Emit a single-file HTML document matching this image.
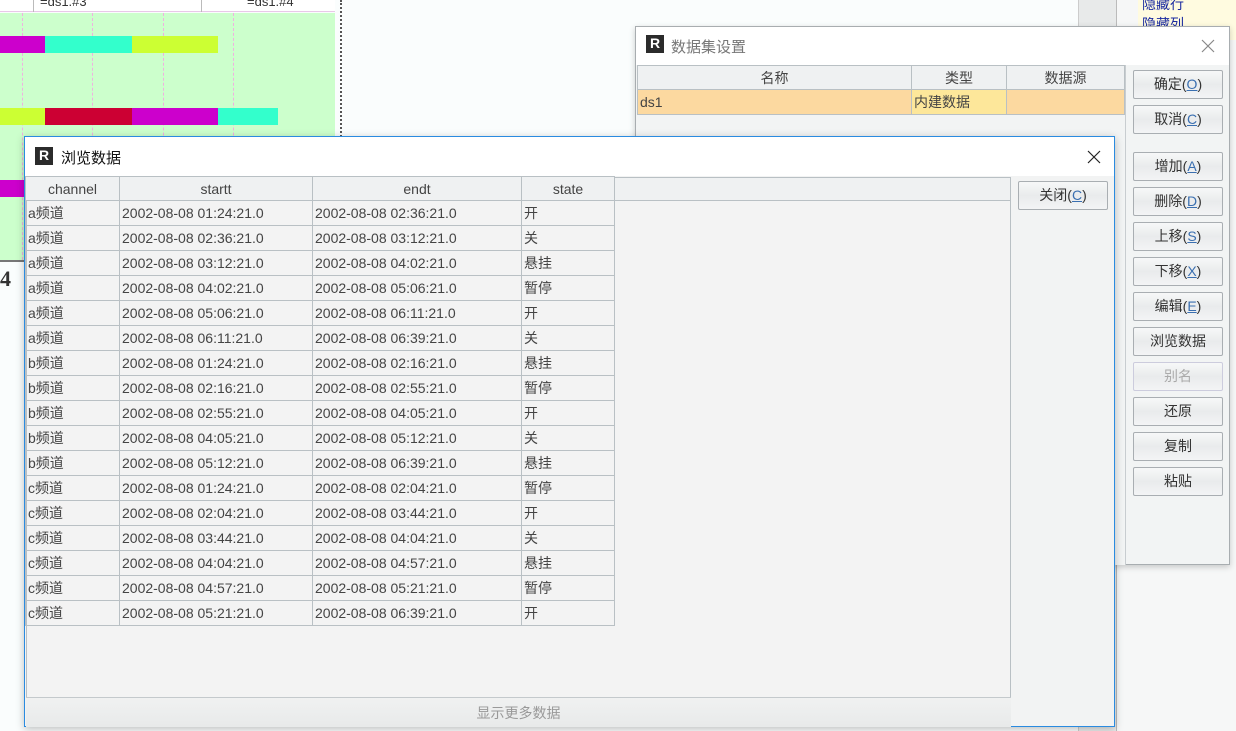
<!DOCTYPE html>
<html><head><meta charset="utf-8"><style>
*{box-sizing:border-box;margin:0;padding:0}
body{width:1236px;height:731px;overflow:hidden;background:#fafdfd;position:relative;font-family:"Liberation Sans","Noto Sans CJK SC",sans-serif;font-size:14px;color:#333}
.a{position:absolute}
.btn{position:absolute;width:90px;height:29px;border:1px solid #a9aeb2;border-radius:2px;background:linear-gradient(#f7f8f8,#e9ebec 50%,#f3f4f5);text-align:center;line-height:27px;font-size:14px;color:#333}
.btn u{color:#3a6fb0;text-decoration:underline}
table{border-collapse:collapse}
td{border:1px solid #b9c0c4;height:25px;padding:0 2px;white-space:nowrap;font-size:14px;color:#444}
th{border:1px solid #b9c0c4;height:24px;font-weight:normal;font-size:14px;color:#444;background:#eff1f2}
.logo{position:absolute;width:18px;height:18px;background:#2b2b2b;color:#fff;font:bold 14px "Liberation Sans";text-align:center;line-height:16px}
</style></head><body>
<div class="a" style="left:0;top:0;width:335px;height:12px;background:#fff;border-bottom:1px solid #e8c8e8"></div>
<div class="a" style="left:40px;top:-6px;font-size:13px">=ds1.#3</div>
<div class="a" style="left:33px;top:0;width:1px;height:12px;background:#bbb"></div>
<div class="a" style="left:201px;top:0;width:1px;height:12px;background:#bbb"></div>
<div class="a" style="left:247px;top:-6px;font-size:13px">=ds1.#4</div>
<div class="a" style="left:0;top:13px;width:335px;height:247px;background:#ccffcc"></div>
<div class="a" style="left:22px;top:13px;height:247px;border-left:1px dashed #f0b0e0"></div>
<div class="a" style="left:92px;top:13px;height:247px;border-left:1px dashed #f0b0e0"></div>
<div class="a" style="left:163px;top:13px;height:247px;border-left:1px dashed #f0b0e0"></div>
<div class="a" style="left:233px;top:13px;height:247px;border-left:1px dashed #f0b0e0"></div>
<div class="a" style="left:0;top:36px;width:45px;height:17px;background:#cc00cc"></div>
<div class="a" style="left:45px;top:36px;width:87px;height:17px;background:#33ffcc"></div>
<div class="a" style="left:132px;top:36px;width:86px;height:17px;background:#ccff33"></div>
<div class="a" style="left:0;top:108px;width:45px;height:17px;background:#ccff33"></div>
<div class="a" style="left:45px;top:108px;width:87px;height:17px;background:#cc0033"></div>
<div class="a" style="left:132px;top:108px;width:86px;height:17px;background:#cc00cc"></div>
<div class="a" style="left:218px;top:108px;width:60px;height:17px;background:#33ffcc"></div>
<div class="a" style="left:0;top:180px;width:25px;height:17px;background:#cc00cc"></div>
<div class="a" style="left:0;top:260px;width:30px;height:2px;background:#777"></div>
<div class="a" style="left:0;top:266px;font:bold 22px 'Liberation Serif';color:#333">4</div>
<div class="a" style="left:340px;top:0;height:137px;border-left:2px dotted #555"></div>
<div class="a" style="left:1078px;top:0;width:38px;height:731px;background:#e8eaea;border-left:1px solid #ccc"></div>
<div class="a" style="left:1116px;top:0;width:120px;height:731px;background:#f6f7f7;border-left:1px solid #bbb"></div>
<div class="a" style="left:1138px;top:0;width:98px;height:40px;background:#fffbe0"></div>
<div class="a" style="left:1142px;top:-6px;color:#1a2aa0;font-size:14px">隐藏行</div>
<div class="a" style="left:1142px;top:14px;color:#1a2aa0;font-size:14px">隐藏列</div>

<div class="a" style="left:635px;top:26px;width:595px;height:539px;background:#f2f4f4;border:1px solid #a8adb0;box-shadow:0 2px 6px rgba(0,0,0,.2)">
  <div class="a" style="left:0;top:0;width:593px;height:38px;background:#fff"></div>
  <div class="logo" style="left:10px;top:8px">R</div>
  <div class="a" style="left:35px;top:9px;font-size:15px;color:#777">数据集设置</div>
  <svg class="a" style="left:565px;top:12px" width="14" height="14"><path d="M1 1L13 13M13 1L1 13" stroke="#888" stroke-width="1.2"/></svg>
  <div class="a" style="left:1px;top:38px;width:489px;height:500px;background:#f2f4f4;border-right:1px solid #c8cdd0"></div>
</div>
<table class="a" style="left:637px;top:65px;width:488px">
<tr><th style="width:274px">名称</th><th style="width:95px">类型</th><th>数据源</th></tr>
<tr style="background:#fcd9a0"><td>ds1</td><td style="background:#fde79a">内建数据</td><td></td></tr>
</table>
<div class="btn" style="left:1133px;top:70px">确定(<u>O</u>)</div>
<div class="btn" style="left:1133px;top:105px">取消(<u>C</u>)</div>
<div class="btn" style="left:1133px;top:152px">增加(<u>A</u>)</div>
<div class="btn" style="left:1133px;top:187px">删除(<u>D</u>)</div>
<div class="btn" style="left:1133px;top:222px">上移(<u>S</u>)</div>
<div class="btn" style="left:1133px;top:257px">下移(<u>X</u>)</div>
<div class="btn" style="left:1133px;top:292px">编辑(<u>E</u>)</div>
<div class="btn" style="left:1133px;top:327px">浏览数据</div>
<div class="btn" style="left:1133px;top:362px;color:#aaa;border-color:#ccd">别名</div>
<div class="btn" style="left:1133px;top:397px">还原</div>
<div class="btn" style="left:1133px;top:432px">复制</div>
<div class="btn" style="left:1133px;top:467px">粘贴</div>

<div class="a" style="left:24px;top:136px;width:1091px;height:591px;background:#f2f3f3;border:1px solid #2a8be0;box-shadow:0 2px 8px rgba(0,0,0,.25)">
  <div class="a" style="left:0;top:0;width:1089px;height:39px;background:#fff"></div>
  <div class="logo" style="left:10px;top:10px">R</div>
  <div class="a" style="left:36px;top:10px;font-size:15px;color:#111">浏览数据</div>
  <svg class="a" style="left:1062px;top:13px" width="14" height="14"><path d="M1 1L13 13M13 1L1 13" stroke="#222" stroke-width="1.2"/></svg>
  <div class="a" style="left:1px;top:40px;width:985px;height:521px;border:1px solid #b9c0c4;border-top:none;background:#f3f3f3"></div>
  <div class="a" style="left:1px;top:40px;width:985px;height:24px;background:#eff1f2;border:1px solid #b9c0c4"></div>
  <div class="a" style="left:1px;top:560px;width:985px;height:30px;background:linear-gradient(#f0f1f1,#e8eaea);border-top:1px solid #c4c9cc;text-align:center;line-height:30px;color:#999">显示更多数据</div>
  <div class="btn" style="left:993px;top:44px">关闭(<u>C</u>)</div>
</div>
<table class="a" style="left:25px;top:176px">
<tr><th style="width:94px">channel</th><th style="width:193px">startt</th><th style="width:209px">endt</th><th style="width:93px">state</th></tr>
<tr><td>a频道</td><td>2002-08-08 01:24:21.0</td><td>2002-08-08 02:36:21.0</td><td>开</td></tr>
<tr><td>a频道</td><td>2002-08-08 02:36:21.0</td><td>2002-08-08 03:12:21.0</td><td>关</td></tr>
<tr><td>a频道</td><td>2002-08-08 03:12:21.0</td><td>2002-08-08 04:02:21.0</td><td>悬挂</td></tr>
<tr><td>a频道</td><td>2002-08-08 04:02:21.0</td><td>2002-08-08 05:06:21.0</td><td>暂停</td></tr>
<tr><td>a频道</td><td>2002-08-08 05:06:21.0</td><td>2002-08-08 06:11:21.0</td><td>开</td></tr>
<tr><td>a频道</td><td>2002-08-08 06:11:21.0</td><td>2002-08-08 06:39:21.0</td><td>关</td></tr>
<tr><td>b频道</td><td>2002-08-08 01:24:21.0</td><td>2002-08-08 02:16:21.0</td><td>悬挂</td></tr>
<tr><td>b频道</td><td>2002-08-08 02:16:21.0</td><td>2002-08-08 02:55:21.0</td><td>暂停</td></tr>
<tr><td>b频道</td><td>2002-08-08 02:55:21.0</td><td>2002-08-08 04:05:21.0</td><td>开</td></tr>
<tr><td>b频道</td><td>2002-08-08 04:05:21.0</td><td>2002-08-08 05:12:21.0</td><td>关</td></tr>
<tr><td>b频道</td><td>2002-08-08 05:12:21.0</td><td>2002-08-08 06:39:21.0</td><td>悬挂</td></tr>
<tr><td>c频道</td><td>2002-08-08 01:24:21.0</td><td>2002-08-08 02:04:21.0</td><td>暂停</td></tr>
<tr><td>c频道</td><td>2002-08-08 02:04:21.0</td><td>2002-08-08 03:44:21.0</td><td>开</td></tr>
<tr><td>c频道</td><td>2002-08-08 03:44:21.0</td><td>2002-08-08 04:04:21.0</td><td>关</td></tr>
<tr><td>c频道</td><td>2002-08-08 04:04:21.0</td><td>2002-08-08 04:57:21.0</td><td>悬挂</td></tr>
<tr><td>c频道</td><td>2002-08-08 04:57:21.0</td><td>2002-08-08 05:21:21.0</td><td>暂停</td></tr>
<tr><td>c频道</td><td>2002-08-08 05:21:21.0</td><td>2002-08-08 06:39:21.0</td><td>开</td></tr>
</table>
</body></html>
